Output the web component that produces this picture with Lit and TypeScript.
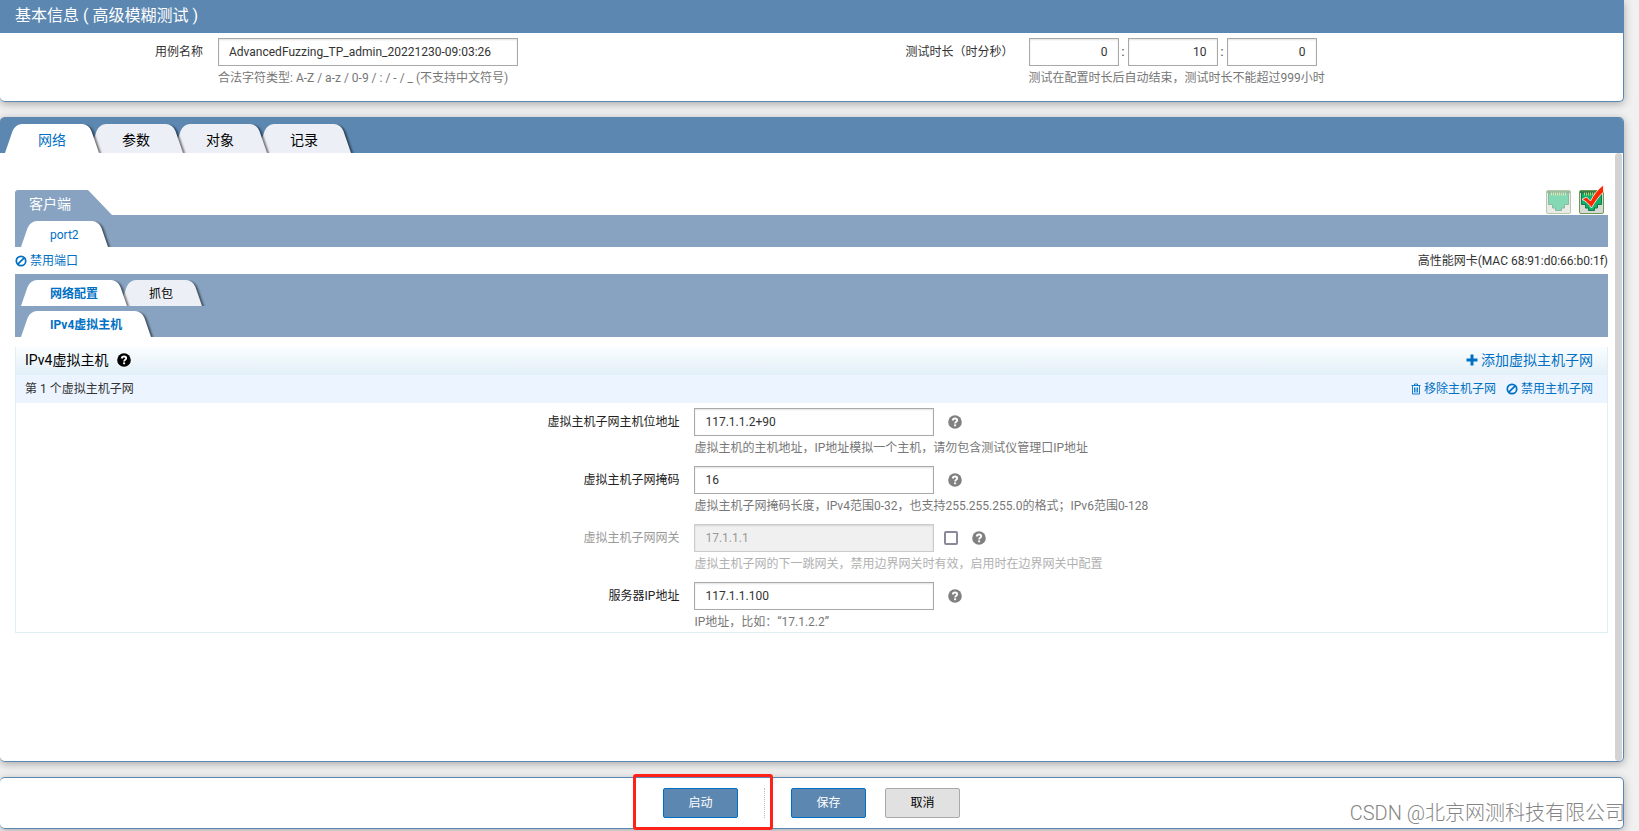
import { LitElement, html, css, svg } from "lit";
import { customElement, property } from "lit/decorators.js";
import { classMap } from "lit/directives/class-map.js";

const question = svg`<circle cx="7" cy="7" r="6.8" fill="currentColor"/><path d="M4.700 5.500C4.900 4.100 5.800 3.500 7 3.500C8.400 3.500 9.200 4.300 9.200 5.300C9.200 6.800 7.100 6.800 7.100 8.500" fill="none" stroke="#fff" stroke-width="1.800"/><rect x="6.100" y="9.400" width="2" height="1.800" fill="#fff"/>`;
const ban = svg`<circle cx="6" cy="6" r="4.700" fill="none" stroke="currentColor" stroke-width="1.700"/><path d="M9.200 2.800L2.800 9.200" stroke="currentColor" stroke-width="1.700"/>`;
const plus = svg`<path d="M4.500 .5h3v4h4v3h-4v4h-3v-4h-4v-3h4z" fill="currentColor"/>`;
const trash = svg`<path d="M.5 2.500h9M3.500 2.500v-1.500h3v1.500M1.500 2.500v8.500h7v-8.500M3.500 4.500v5M5 4.500v5M6.500 4.500v5" fill="none" stroke="currentColor" stroke-width=".9"/>`;

@customElement("slant-tab")
export class SlantTab extends LitElement {
  @property({ type: Boolean }) active = false;
  @property({ type: Boolean }) large = false;
  @property({ type: Boolean }) strong = false;
  static styles = css`
    :host { display: block; position: relative; margin-right: -7px; }
    :host([large]) { margin-right: -10px; }
    button {
      position: relative; isolation: isolate; display: block; height: 26px; padding: 0 29px;
      border: 0; background: none; color: #000; font: inherit; font-size: 12px; line-height: 28px;
      white-space: nowrap; cursor: pointer; overflow: visible;
    }
    button.large { height: 29px; padding: 0 33px; font-size: 14px; line-height: 32px; }
    button.active { color: #0070c4; }
    button.strong { font-weight: 700; }
    button::before, button::after {
      content: ""; position: absolute; z-index: -1; top: 0; bottom: 0; width: 60%; background: #eceff5;
    }
    button::before { left: 0; transform: skewX(-19deg); transform-origin: 0 100%; border-top-left-radius: 7px; }
    button::after {
      right: 0; transform: skewX(19deg); transform-origin: 100% 100%; border-top-right-radius: 7px;
      box-shadow: 2px 1px 2px rgba(0, 0, 0, 0.5); clip-path: inset(0 -6px 0 0);
    }
    button.active::before, button.active::after { background: #fff; }
  `;
  render() {
    return html`<button role="tab" aria-selected=${this.active ? "true" : "false"}
      class=${classMap({ active: this.active, large: this.large, strong: this.strong })}><slot></slot></button>`;
  }
}

interface Field { id: string; label: string; value: string; hint: string; off?: boolean; }

const fields: Field[] = [
  { id: "host", label: "虚拟主机子网主机位地址", value: "117.1.1.2+90", hint: "虚拟主机的主机地址，IP地址模拟一个主机，请勿包含测试仪管理口IP地址" },
  { id: "mask", label: "虚拟主机子网掩码", value: "16", hint: "虚拟主机子网掩码长度，IPv4范围0-32，也支持255.255.255.0的格式；IPv6范围0-128" },
  { id: "gateway", label: "虚拟主机子网网关", value: "17.1.1.1", hint: "虚拟主机子网的下一跳网关，禁用边界网关时有效，启用时在边界网关中配置", off: true },
  { id: "server", label: "服务器IP地址", value: "117.1.1.100", hint: "IP地址，比如：“17.1.2.2”" },
];

@customElement("app-root")
export class AppRoot extends LitElement {
  static styles = css`
    :host {
      display: flex; flex-direction: column; gap: 15px; min-height: 100vh; box-sizing: border-box;
      padding: 0 15px 2px 0; background: #f0f0f0; color: #333; position: relative; overflow: hidden;
      font: 12px/18px Roboto, "Noto Sans CJK SC", sans-serif;
    }
    * { box-sizing: border-box; }
    svg { display: block; flex: none; }
    .panel {
      background: #fff; border: 1px solid #5c87b0; border-left: 0; border-radius: 5px;
      box-shadow: 0 2px 8px rgba(0, 0, 0, 0.3);
    }
    .basic { border-top: 0; border-radius: 0 0 5px 5px; }
    h1 { margin: 0; padding: 0 15px; background: #5c87b0; color: #fff; font-size: 16px; line-height: 31px; font-weight: 400; height: 33px; }
    .basic-form { display: flex; height: 68px; padding: 5px 0 0; }
    .half { flex: 1; display: flex; align-items: flex-start; }
    .half label, .half .caption { text-align: right; line-height: 28px; }
    .first label { width: 203px; margin-right: 15px; }
    .second .caption { width: 202px; margin-right: 15px; }
    input[type="text"] {
      display: block; height: 28px; border: 1px solid #a9a9a9; border-radius: 0; padding: 0 10px;
      font: inherit; color: #333; background: #fff; box-shadow: inset 0 1px 2px rgba(0, 0, 0, 0.12);
    }
    .name { width: 300px; }
    .times { display: flex; align-items: center; }
    .times input { width: 90px; text-align: right; }
    .times span { width: 9px; text-align: center; }
    .hint { margin: 3px 0 0; color: #777; white-space: nowrap; }
    .main { flex: 1; display: flex; flex-direction: column; }
    .main-tabs { display: flex; flex: none; height: 35px; padding: 6px 0 0 5px; background: #5c87b0; border-radius: 4px 4px 0 0; }
    slant-tab:nth-of-type(1) { z-index: 4; }
    slant-tab:nth-of-type(2) { z-index: 3; }
    slant-tab:nth-of-type(3) { z-index: 2; }
    .body { flex: 1; display: flex; }
    .content { flex: 1; padding: 37px 7px 0 15px; }
    .track { width: 7px; margin-right: 1px; border-radius: 4px; background: #d3d3d3; }
    .side { display: flex; align-items: flex-end; justify-content: space-between; height: 25px; }
    .client { height: 25px; width: 97px; padding: 2px 14px 0; background: #87a3c1; color: #fff; font-size: 14px; line-height: 24px;
      border-top-left-radius: 3px; clip-path: polygon(0 0, 73px 0, 97px 100%, 0 100%); }
    .ports { display: flex; gap: 8px; margin: 0 4px 1px 0; }
    .ports button { padding: 0; border: 0; background: none; }
    .band { background: #87a3c1; padding: 6px 0 0 6px; }
    .band > div { display: flex; }
    .second-row { padding-top: 5px; }
    .port-info { display: flex; justify-content: space-between; align-items: center; height: 27px; }
    a { display: flex; align-items: center; gap: 3px; color: #0070c4; text-decoration: none; }
    .section { margin-top: 10px; border: 1px solid #e0eef5; border-top: 0; }
    .section-head, .subnet { display: flex; align-items: center; justify-content: space-between; height: 28px; padding: 0 14px 0 9px; }
    .section-head { padding-bottom: 2px; background: linear-gradient(#fafdff, #e2eff7); color: #000; font-size: 14px; }
    .section-head h2 { display: flex; align-items: center; gap: 9px; margin: 0; font-size: 14px; font-weight: 400; }
    .subnet { padding-bottom: 1px; background: #ecf5ff; }
    .actions { display: flex; gap: 10px; }
    .fields { padding: 5px 0 1px; display: grid; gap: 9px; }
    .field { display: grid; grid-template-columns: 41.7% 1fr; column-gap: 15px; }
    .field label { text-align: right; line-height: 28px; color: #222; }
    .control { display: flex; align-items: center; color: #808080; }
    .control input[type="text"] { width: 240px; margin-right: 14px; }
    .field .hint { grid-column: 2; }
    .off label { color: #999; }
    .off .hint { color: #b0b0b0; }
    .off .control input[type="text"] { color: #999; background: #f0f0f0; border-color: #ccc; margin-right: 10px; }
    .check { appearance: none; width: 14px; height: 14px; margin: 0 14px 0 0; border: 2px solid #8a8999; border-radius: 2px; background: #fff; }
    .footer { display: flex; justify-content: center; align-items: center; height: 52px; }
    .action { width: 75px; height: 30px; padding: 0; border: 1px solid #0070c4; border-radius: 2px; background: #5c87b0; color: #fff; font: inherit; }
    .action.cancel { margin-left: 19px; border-color: #a9a9a9; background: #e1e1e1; color: #000; }
    .start { position: relative; display: flex; padding-right: 26px; margin-right: 26px; border-right: 1px dotted #bbb; }
    .mark { position: absolute; left: -30px; top: -14px; width: 140px; height: 56px; border: 3px solid #ff2218; border-radius: 3px; pointer-events: none; }
    .watermark { position: absolute; right: 14px; bottom: 4px; font: 300 20px/28px Roboto, "Noto Sans CJK SC", sans-serif; color: #858585; }
  `;

  help() {
    return html`<svg width="14" height="14" viewBox="0 0 14 14">${question}</svg>`;
  }

  port(selected: boolean) {
    return html`<button aria-label=${selected ? "port2" : "port1"}>
      <svg width="25" height="24" viewBox="0 0 25 24" overflow="visible">
        <g opacity=${selected ? 1 : 0.5}>
          <rect x=".5" y=".5" width="24" height="23" rx="1.500" fill="#d6d9d4" stroke="#6b9a50"/>
          <path d="M1 1h23v2H1z" fill="#3e7c4c"/>
          <path d="M2.500 3h20v11.500h-4v3.500h-3v2.500h-6v-2.500h-3v-3.500h-4z" fill="#0cb36c" stroke="#17774a"/>
          <path d="M5 4h15" stroke="#cfc56a" stroke-width="3" stroke-dasharray="1 1"/>
        </g>
        ${selected ? svg`<path d="M3 9.500l4.500-2.500 4 4C14.500 5 19-1 24.500-5v7C19 7 16 12 12.500 18 10 14 7 11 3 9.500z" fill="#ff2600" stroke="#fff" stroke-width=".8"/>` : ""}
      </svg></button>`;
  }

  field(f: Field) {
    return html`<div class=${classMap({ field: true, off: !!f.off })}>
      <label for=${f.id}>${f.label}</label>
      <div class="control">
        <input id=${f.id} type="text" .value=${f.value} ?disabled=${!!f.off}>
        ${f.off ? html`<input class="check" type="checkbox" aria-label=${f.label}>` : ""}
        ${this.help()}
      </div>
      <p class="hint">${f.hint}</p>
    </div>`;
  }

  render() {
    return html`
      <section class="panel basic">
        <h1>基本信息 ( 高级模糊测试 )</h1>
        <div class="basic-form">
          <div class="half first">
            <label for="name">用例名称</label>
            <div>
              <input id="name" class="name" type="text" .value=${"AdvancedFuzzing_TP_admin_20221230-09:03:26"}>
              <p class="hint">合法字符类型: A-Z / a-z / 0-9 / : / - / _ (不支持中文符号)</p>
            </div>
          </div>
          <div class="half second">
            <label class="caption" for="hours">测试时长（时分秒）</label>
            <div>
              <div class="times">
                <input id="hours" type="text" .value=${"0"}><span>:</span>
                <input type="text" aria-label="分" .value=${"10"}><span>:</span>
                <input type="text" aria-label="秒" .value=${"0"}>
              </div>
              <p class="hint">测试在配置时长后自动结束，测试时长不能超过999小时</p>
            </div>
          </div>
        </div>
      </section>

      <section class="panel main">
        <nav class="main-tabs" role="tablist">
          ${["网络", "参数", "对象", "记录"].map((t, i) => html`<slant-tab large ?active=${i === 0}>${t}</slant-tab>`)}
        </nav>
        <div class="body">
          <div class="content">
            <div class="side">
              <div class="client">客户端</div>
              <div class="ports">${this.port(false)}${this.port(true)}</div>
            </div>
            <div class="band"><div><slant-tab active>port2</slant-tab></div></div>
            <div class="port-info">
              <a href="#"><svg width="12" height="12" viewBox="0 0 12 12">${ban}</svg>禁用端口</a>
              <span>高性能网卡(MAC 68:91:d0:66:b0:1f)</span>
            </div>
            <div class="band">
              <div><slant-tab active strong>网络配置</slant-tab><slant-tab>抓包</slant-tab></div>
              <div class="second-row"><slant-tab active strong>IPv4虚拟主机</slant-tab></div>
            </div>
            <div class="section">
              <div class="section-head">
                <h2>IPv4虚拟主机 ${this.help()}</h2>
                <a href="#"><svg width="12" height="12" viewBox="0 0 12 12">${plus}</svg>添加虚拟主机子网</a>
              </div>
              <div class="subnet">
                <span>第 1 个虚拟主机子网</span>
                <div class="actions">
                  <a href="#"><svg width="10" height="12" viewBox="0 0 10 12">${trash}</svg>移除主机子网</a>
                  <a href="#"><svg width="12" height="12" viewBox="0 0 12 12">${ban}</svg>禁用主机子网</a>
                </div>
              </div>
              <div class="fields">${fields.map((f) => this.field(f))}</div>
            </div>
          </div>
          <div class="track"></div>
        </div>
      </section>

      <footer class="panel footer">
        <div class="start"><button class="action">启动</button><span class="mark"></span></div>
        <button class="action">保存</button>
        <button class="action cancel">取消</button>
      </footer>
      <div class="watermark">CSDN @北京网测科技有限公司</div>
    `;
  }
}
